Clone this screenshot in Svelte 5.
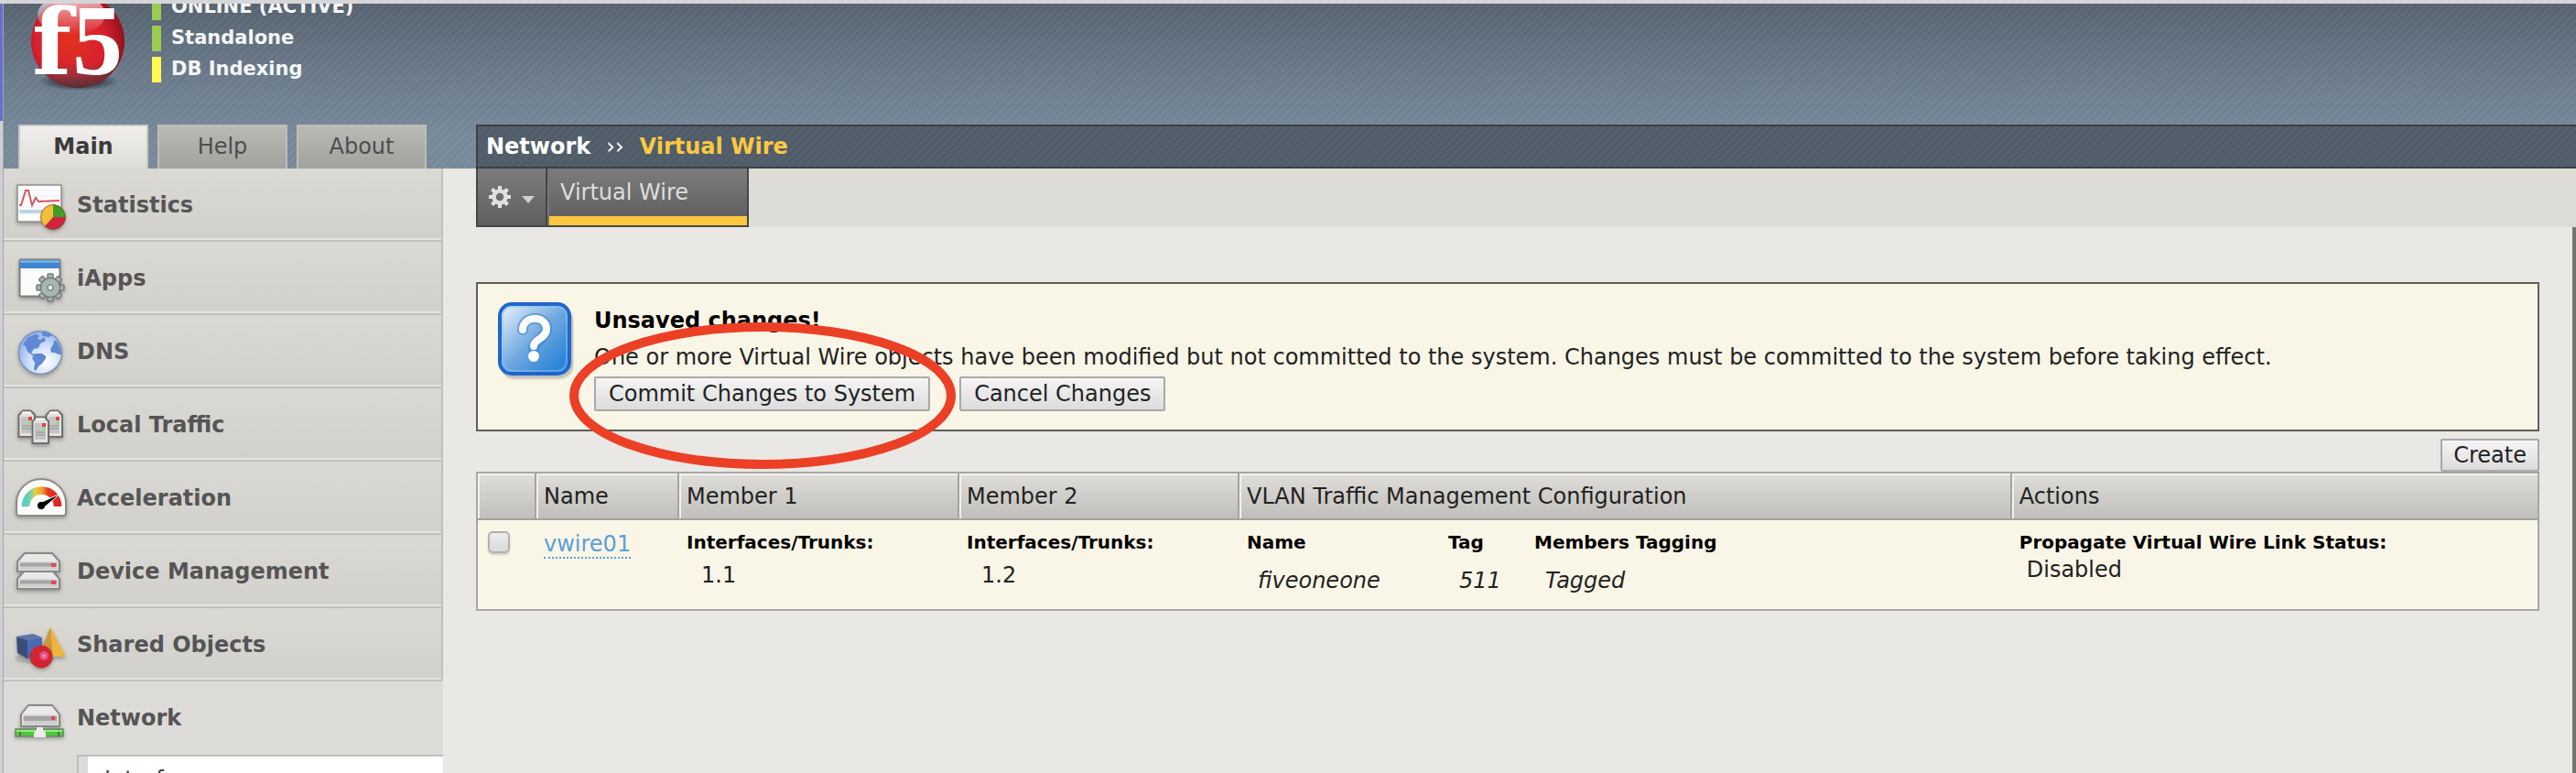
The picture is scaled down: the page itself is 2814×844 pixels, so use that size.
<script>
  let activeTab = 'Main';
  let selected = false;

  const tabs = ['Main', 'Help', 'About'];

  const statuses = [
    { label: 'ONLINE (ACTIVE)', color: '#9ccb52' },
    { label: 'Standalone', color: '#9ccb52' },
    { label: 'DB Indexing', color: '#fdfb52' },
  ];

  const sections = [
    { id: 'stats', label: 'Statistics' },
    { id: 'iapps', label: 'iApps' },
    { id: 'dns', label: 'DNS' },
    { id: 'ltm', label: 'Local Traffic' },
    { id: 'accel', label: 'Acceleration' },
    { id: 'device', label: 'Device Management' },
    { id: 'shared', label: 'Shared Objects' },
    { id: 'network', label: 'Network', open: true },
  ];

  const wires = [
    {
      name: 'vwire01',
      member1: '1.1',
      member2: '1.2',
      vlan: { name: 'fiveoneone', tag: '511', tagging: 'Tagged' },
      propagate: 'Disabled',
    },
  ];

  const gearTeeth = [0, 45, 90, 135, 180, 225, 270, 315];
</script>

<div class="frame">
  <div class="edge-left"></div>

  <div class="app">
    <header>
      <div class="brand">
        <svg class="logo" width="108" height="108" viewBox="0 0 108 108" role="img" aria-label="F5">
          <defs>
            <radialGradient id="ball" cx="0.42" cy="0.5" r="0.62">
              <stop offset="0" stop-color="#e0321f" />
              <stop offset="0.6" stop-color="#d8202f" />
              <stop offset="0.85" stop-color="#a5161f" />
              <stop offset="1" stop-color="#7c1219" />
            </radialGradient>
            <linearGradient id="shine" x1="0" y1="0" x2="0" y2="1">
              <stop offset="0" stop-color="#fff" stop-opacity="0.75" />
              <stop offset="1" stop-color="#fff" stop-opacity="0" />
            </linearGradient>
            <linearGradient id="low" x1="0" y1="0" x2="0" y2="1">
              <stop offset="0.72" stop-color="#555" stop-opacity="0" />
              <stop offset="1" stop-color="#4b3236" stop-opacity="0.85" />
            </linearGradient>
            <radialGradient id="ground">
              <stop offset="0.3" stop-color="#1b222b" stop-opacity="0.9" />
              <stop offset="1" stop-color="#1b222b" stop-opacity="0" />
            </radialGradient>
          </defs>
          <ellipse cx="54" cy="95" rx="44" ry="10" fill="url(#ground)" />
          <circle cx="53" cy="51" r="51" fill="url(#ball)" />
          <ellipse cx="46" cy="22" rx="37" ry="22" fill="url(#shine)" />
          <circle cx="53" cy="51" r="51" fill="url(#low)" />
          <text x="3" y="87" class="logo-f">f</text>
          <text x="47" y="87" class="logo-5">5</text>
        </svg>
        <ul class="statuses">
          {#each statuses as status}
            <li><span class="bar" style="background-color: {status.color}"></span>{status.label}</li>
          {/each}
        </ul>
      </div>

      <div class="tabs">
        {#each tabs as tab}
          <button type="button" class:active={activeTab === tab} on:click={() => (activeTab = tab)}>{tab}</button>
        {/each}
      </div>

      <nav class="breadcrumb" aria-label="Breadcrumb">
        <span>Network</span>
        <span class="sep">››</span>
        <span class="current">Virtual Wire</span>
      </nav>
    </header>

    <div class="body">
      <nav class="sidebar">
        {#each sections as section}
          <a href="#{section.id}" class="section" class:open={section.open}>
            <svg class="icon" width="60" height="56" viewBox="0 0 60 56" aria-hidden="true">
              {#if section.id === 'stats'}
                <rect x="3" y="6" width="48" height="40" fill="#fcfcfd" stroke="#8f8f8f" stroke-width="1.5" />
                <path d="M6 12h42M6 18h42M6 30h42" stroke="#e9eef4" stroke-width="1" />
                <rect x="5" y="33" width="42" height="4" fill="#bcd3e8" />
                <path d="M5 28h2L12 12h3l4 16 4-8 3 4 23-1" fill="none" stroke="#d4585f" stroke-width="2" />
                <circle cx="42" cy="41" r="13.5" fill="#d0243a" />
                <path d="M42 41V27.5A13.5 13.5 0 0 1 55.500 41z" fill="#3f9f26" />
                <path d="M42 41V27.500A13.500 13.500 0 0 0 33 51z" fill="#f2bf3d" />
                <circle cx="42" cy="41" r="13.5" fill="none" stroke="#6d4a1c" stroke-opacity="0.6" />
              {:else if section.id === 'iapps'}
                <rect x="5.500" y="7.500" width="44" height="40" rx="1" fill="#fbfafd" stroke="#7d7d7d" stroke-width="2" />
                <rect x="6" y="8" width="43" height="9" fill="#3f86cc" />
                <rect x="6" y="8" width="43" height="3" fill="#6fb0ea" />
                <g fill="#a9b5b2" stroke="#737d7c" stroke-width="1.5">
                  {#each gearTeeth as angle}
                    <rect x="36" y="23" width="6" height="9" rx="1" transform="rotate({angle} 39 38)" />
                  {/each}
                  <circle cx="39" cy="38" r="10.500" />
                </g>
                <circle cx="39" cy="38" r="9.500" fill="#a9b5b2" />
                <circle cx="39" cy="38" r="3" fill="#f3f5f5" stroke="#808b89" stroke-width="1.5" />
              {:else if section.id === 'dns'}
                <defs>
                  <radialGradient id="sea" cx="0.62" cy="0.7" r="0.7">
                    <stop offset="0" stop-color="#ffffff" />
                    <stop offset="0.5" stop-color="#d3e1fa" />
                    <stop offset="1" stop-color="#91b2ec" />
                  </radialGradient>
                </defs>
                <circle cx="28" cy="29" r="23.500" fill="url(#sea)" stroke="#7f93b8" stroke-width="1.5" />
                <g fill="#5f89d6">
                  <path d="M9 20l6-8 8-3 4 1-2 4 3 1 4-3 2 4-6 3-2 5-5 1-3 4 5 3-2 1-7-5-2-6z" />
                  <path d="M29 7l6-1 6 4-4 2-6-1z" />
                  <path d="M22 30l8 0 4 3 0 2-4 6-4 3-3 5-2-2 1-7-3-5z" />
                  <path d="M39 25l3-5 1-4 3 0 4 8 1 7-3 0-4-2-4 0z" />
                </g>
              {:else if section.id === 'ltm'}
                {#each [[4, 12], [34, 12], [19, 19]] as [x, y]}
                  <g transform="translate({x} {y})">
                    <path d="M0.500 5L5 0.500h8.500L18 5v24H0.500z" fill="#e3e3e3" stroke="#6f6f6f" stroke-width="2" />
                    <path d="M3 7h12v18H3z" fill="#c4c4c4" />
                    <path d="M4 17h10M4 20h10" stroke="#8f8f8f" stroke-width="1" />
                    <path d="M4 2.500h10" stroke="#fafafa" stroke-width="2" />
                    <rect x="11" y="7" width="4" height="4" fill="#ea3b48" />
                    <rect x="11" y="12" width="4" height="3" fill="#93de74" />
                  </g>
                {/each}
              {:else if section.id === 'accel'}
                <defs>
                  <linearGradient id="heat">
                    <stop offset="0" stop-color="#52cfc4" />
                    <stop offset="0.15" stop-color="#7fd0a4" />
                    <stop offset="0.3" stop-color="#e2d043" />
                    <stop offset="0.5" stop-color="#f0a534" />
                    <stop offset="0.7" stop-color="#e6391f" />
                    <stop offset="1" stop-color="#e02424" />
                  </linearGradient>
                </defs>
                <path d="M2 44V33a27 26 0 0 1 54 0v11q0 3-3 3H5q-3 0-3-3z" fill="#fbfbf9" stroke="#8b8b8b" stroke-width="2" />
                <path d="M12 37a17.500 17.500 0 0 1 35 0" fill="none" stroke="url(#heat)" stroke-width="8.500" />
                <path d="M26.500 33.500L50 23 31 39z" fill="#000" stroke="#fbfbf9" stroke-width="1" />
                <circle cx="29" cy="36" r="4" fill="#000" />
              {:else if section.id === 'device'}
                {#each [26, 7] as y}
                  <g transform="translate(2 {y})">
                    <path d="M1 10L9 1h30l8 9v11H1z" fill="#e8e8e8" stroke="#888" stroke-width="2" stroke-linejoin="round" />
                    <path d="M2.500 10.500h43v9h-43z" fill="#cfcfcf" />
                    <path d="M4 11.500h40v4H4z" fill="#a5a5a5" />
                    <rect x="38" y="12" width="5" height="4" fill="#e8414e" />
                  </g>
                {/each}
              {:else if section.id === 'shared'}
                <ellipse cx="22" cy="43" rx="22" ry="6" fill="#000" opacity="0.12" />
                <path d="M2 19l12 4v20L3 37z" fill="#3a4d7a" />
                <path d="M2 19l18-3 10 4-16 3z" fill="#5a74ae" />
                <path d="M14 23l16-3v20l-16 3z" fill="#4a6bb3" />
                <path d="M39 9l17 32H28z" fill="#edb53f" />
                <path d="M39 9l3 32H26z" fill="#c99a3a" />
                <circle cx="29" cy="41" r="12.500" fill="#d02630" />
                <circle cx="32" cy="40" r="5" fill="#ea4c86" />
                <circle cx="32" cy="40" r="2" fill="#f48fb4" />
              {:else}
                <path d="M7 24l8-10h26l8 10v13H7z" fill="#eaeaea" stroke="#888" stroke-width="2" stroke-linejoin="round" />
                <path d="M9 24.500h38v11H9z" fill="#cfcfcf" />
                <path d="M10 26h36v5H10z" fill="#a5a5a5" />
                <rect x="40" y="26" width="4" height="4" fill="#e8414e" />
                <rect x="1" y="40" width="52" height="8" fill="#4fc93a" stroke="#6b8a63" stroke-width="1.500" />
                <path d="M6 40v8M48 40v8" stroke="#54704e" stroke-width="2" />
                <path d="M2 42h50" stroke="#93ea80" stroke-width="2" />
                <path d="M24 38h7v3l3 3v5H21v-5l3-3z" fill="#ececec" />
              {/if}
            </svg>
            {section.label}
          </a>
        {/each}
        <div class="submenu">
          <a href="#interfaces">Interfaces</a>
        </div>
      </nav>

      <main>
        <div class="menubar">
          <button type="button" class="gear" aria-label="Options">
            <svg width="52" height="26" viewBox="0 0 52 26" aria-hidden="true">
              <g fill="#e4e4e4">
                {#each gearTeeth as angle}
                  <rect x="11" y="1" width="4" height="6" transform="rotate({angle} 13 13)" />
                {/each}
              </g>
              <circle cx="13" cy="13" r="6.500" fill="none" stroke="#e0e0e0" stroke-width="4.500" />
              <path d="M37 12h14l-7 8z" fill="#cfcfcf" />
            </svg>
          </button>
          <a href="#virtual-wire" class="menu-tab">Virtual Wire</a>
        </div>

        <div class="content">
          <section class="notice">
            <svg width="88" height="88" viewBox="0 0 88 88" aria-hidden="true">
              <defs>
                <linearGradient id="tile" x1="0" y1="0" x2="1" y2="1">
                  <stop offset="0.05" stop-color="#e4eefa" />
                  <stop offset="0.5" stop-color="#6ea8e0" />
                  <stop offset="0.85" stop-color="#2f86d8" />
                </linearGradient>
              </defs>
              <rect x="3" y="6" width="80" height="79" rx="15" fill="#000" opacity="0.08" />
              <rect x="2" y="4" width="80" height="79" rx="15" fill="#000" opacity="0.14" />
              <rect x="2" y="2" width="76" height="76" rx="13" fill="url(#tile)" stroke="#1f66cc" stroke-width="4" />
              <rect x="5" y="5" width="70" height="70" rx="10" fill="none" stroke="#8fc1f2" stroke-opacity="0.5" stroke-width="2" />
              <path d="M27 30c0-16 26-16 26-1 0 11-14 11-14 23" fill="none" stroke="#3b82d0" stroke-opacity="0.55" stroke-width="12" stroke-linecap="round" />
              <path d="M27 30c0-16 26-16 26-1 0 11-14 11-14 19" fill="none" stroke="#fff" stroke-width="8" stroke-linecap="round" />
              <circle cx="39" cy="59" r="6" fill="#fff" />
            </svg>
            <div class="notice-text">
              <h2>Unsaved changes!</h2>
              <p>One or more Virtual Wire objects have been modified but not committed to the system. Changes must be committed to the system before taking effect.</p>
              <div class="actions">
                <div class="marked">
                  <button type="button">Commit Changes to System</button>
                  <svg class="ring" width="422" height="160" viewBox="0 0 422 160" aria-hidden="true">
                    <ellipse cx="211" cy="80" rx="206" ry="75" />
                  </svg>
                </div>
                <button type="button">Cancel Changes</button>
              </div>
            </div>
          </section>

          <div class="toolbar">
            <button type="button">Create</button>
          </div>

          <table class="wires">
            <colgroup>
              <col class="c-check" />
              <col class="c-name" />
              <col class="c-member" />
              <col class="c-member" />
              <col class="c-vlan" />
              <col />
            </colgroup>
            <thead>
              <tr>
                <th></th>
                <th>Name</th>
                <th>Member 1</th>
                <th>Member 2</th>
                <th>VLAN Traffic Management Configuration</th>
                <th>Actions</th>
              </tr>
            </thead>
            <tbody>
              {#each wires as wire}
                <tr>
                  <td class="check"><input type="checkbox" aria-label="Select {wire.name}" bind:checked={selected} /></td>
                  <td><a class="wire-link" href="#{wire.name}">{wire.name}</a></td>
                  <td>
                    <strong>Interfaces/Trunks:</strong>
                    <div class="member">{wire.member1}</div>
                  </td>
                  <td>
                    <strong>Interfaces/Trunks:</strong>
                    <div class="member">{wire.member2}</div>
                  </td>
                  <td>
                    <table class="vlan">
                      <thead>
                        <tr><th class="v-name">Name</th><th class="v-tag">Tag</th><th>Members Tagging</th></tr>
                      </thead>
                      <tbody>
                        <tr><td>{wire.vlan.name}</td><td>{wire.vlan.tag}</td><td>{wire.vlan.tagging}</td></tr>
                      </tbody>
                    </table>
                  </td>
                  <td>
                    <strong>Propagate Virtual Wire Link Status:</strong>
                    <div class="propagate">{wire.propagate}</div>
                  </td>
                </tr>
              {/each}
            </tbody>
          </table>
        </div>
      </main>
    </div>
  </div>
</div>

<style>
  :global(body) {
    margin: 0;
    background-color: #e9e8e4;
  }

  .frame {
    display: flex;
    height: 100vh;
    overflow: hidden;
    box-sizing: border-box;
    border-top: 4px solid #d6d6d8;
    background-color: #e9e8e4;
    color: #222;
    font-family: 'DejaVu Sans', Verdana, sans-serif;
    font-size: 24px;
    line-height: 28px;
  }

  .edge-left {
    flex: none;
    width: 4px;
    background: linear-gradient(#6370d0 128px, #cfcfd4 128px);
    box-sizing: border-box;
    border-right: 1px solid #a5a5ab;
  }

  .app {
    flex: 1;
    min-width: 0;
    display: flex;
    flex-direction: column;
  }

  header {
    display: grid;
    grid-template-columns: 516px 1fr;
    grid-template-rows: 132px 48px;
    background:
      repeating-linear-gradient(135deg, rgba(255, 255, 255, 0.04) 0 3px, transparent 3px 6px),
      linear-gradient(#56626f, #6a7a8a 45%, #778899 80%);
  }

  .brand {
    grid-column: 1 / 3;
    display: flex;
    align-items: flex-end;
    overflow: hidden;
    padding-left: 28px;
  }

  .logo {
    flex: none;
    margin-bottom: 34px;
  }

  .logo-f,
  .logo-5 {
    fill: #fff;
    font-weight: bold;
  }

  .logo-f {
    font-family: 'DejaVu Serif', serif;
    font-size: 100px;
  }

  .logo-5 {
    font-family: 'Liberation Serif', serif;
    font-size: 110px;
  }

  .statuses {
    display: flex;
    flex-direction: column;
    gap: 6px;
    margin: 0 0 46px 26px;
    padding: 0;
    list-style: none;
    color: #f4f6f8;
    font-size: 21px;
    font-weight: bold;
  }

  .statuses li {
    display: flex;
    gap: 11px;
    line-height: 26px;
    height: 28px;
  }

  .bar {
    width: 10px;
    height: 28px;
  }

  .tabs {
    display: flex;
    gap: 10px;
    padding-left: 16px;
  }

  .tabs button {
    width: 142px;
    padding: 0 0 2px;
    border: 2px solid #bdbdb9;
    border-bottom: none;
    background: linear-gradient(#b9b9b5, #a1a19d);
    color: #4d4d4d;
    font: inherit;
    cursor: pointer;
  }

  .tabs button.active {
    border-color: #c9c9c6;
    background: linear-gradient(#f0efed, #dddcd8);
    color: #3b3b3b;
    font-weight: bold;
  }

  .breadcrumb {
    display: flex;
    align-items: center;
    gap: 17px;
    padding-left: 9px;
    border: 2px solid #3d4143;
    border-right: none;
    background: repeating-linear-gradient(135deg, #54606c 0 3px, #4f5b66 3px 6px);
    color: #fff;
    font-weight: bold;
  }

  .breadcrumb .sep {
    font-weight: normal;
  }

  .breadcrumb .current {
    color: #fdc840;
  }

  .body {
    flex: 1;
    display: flex;
    min-height: 0;
  }

  .sidebar {
    flex: none;
    width: 480px;
    background-color: #dddcd8;
  }

  .section {
    display: flex;
    align-items: center;
    gap: 8px;
    height: 80px;
    box-sizing: border-box;
    padding: 2px 0 0 12px;
    border-right: 2px solid #bfbfbc;
    border-bottom: 2px solid #c1c0bd;
    box-shadow: inset 0 -2px 0 #e6e5e2;
    background: linear-gradient(#dad9d4, #d1d0cb);
    color: #555;
    font-weight: bold;
    text-decoration: none;
  }

  .section.open {
    border-color: transparent;
    box-shadow: none;
    background: none;
  }

  .icon {
    flex: none;
    filter: drop-shadow(0 2px 2px rgba(0, 0, 0, 0.3));
  }

  .submenu {
    margin-left: 80px;
    border-top: 2px solid #bdbdbb;
    border-left: 2px solid #bdbdbb;
    box-shadow: inset 10px 0 0 #dcdcdc;
    background-color: #fff;
  }

  .submenu a {
    display: block;
    padding: 11px 28px;
    color: #444;
    text-decoration: none;
  }

  main {
    flex: 1;
    min-width: 0;
    display: flex;
    flex-direction: column;
    padding-left: 36px;
  }

  .menubar {
    display: flex;
    height: 64px;
    background-color: #dddcd7;
  }

  .gear {
    width: 78px;
    padding: 0;
    border: 2px solid #464646;
    border-top: none;
    background: linear-gradient(#7c7c7c, #5f5f5f);
    cursor: pointer;
  }

  .gear svg {
    display: block;
    margin: 0 auto;
  }

  .menu-tab {
    width: 220px;
    box-sizing: border-box;
    padding: 12px 14px;
    border-right: 2px solid #464646;
    border-bottom: 2px solid #464646;
    box-shadow: inset 2px 0 0 #777, inset 0 -10px 0 #fdc840;
    background: linear-gradient(#7c7c7c, #626262 50px);
    color: #dedede;
    text-decoration: none;
  }

  .content {
    flex: 1;
    padding: 60px 36px 0 0;
    border-right: 4px solid #737373;
  }

  .notice {
    display: flex;
    gap: 17px;
    padding: 20px 22px;
    border: 2px solid #5f5f5a;
    background-color: #faf6e7;
  }

  .notice > svg {
    flex: none;
  }

  h2 {
    margin: 6px 0 12px;
    color: #000;
    font-size: 24px;
    line-height: 28px;
  }

  p {
    margin: 0 0 7px;
  }

  .actions {
    display: flex;
    gap: 32px;
  }

  .actions button,
  .toolbar button {
    height: 38px;
    padding: 0 14px;
    border: 2px solid #a9a9a9;
    border-radius: 2px;
    background: linear-gradient(#f5f5f5, #dcdcdc);
    color: #222;
    font: inherit;
    white-space: nowrap;
    cursor: pointer;
  }

  .marked {
    position: relative;
  }

  /* ring drawn over the button, wider than it */
  .ring {
    position: absolute;
    top: -59px;
    left: -27px;
    pointer-events: none;
  }

  .ring ellipse {
    fill: none;
    stroke: #ec4026;
    stroke-width: 10;
  }

  .toolbar {
    display: flex;
    justify-content: flex-end;
    padding-top: 8px;
  }

  .toolbar button {
    height: 36px;
    padding: 0 12px;
  }

  table {
    border-spacing: 0;
  }

  .wires {
    width: 100%;
    table-layout: fixed;
    border: 2px solid #a6a7a6;
  }

  .c-check {
    width: 64px;
  }

  .c-name {
    width: 156px;
  }

  .c-member {
    width: 306px;
  }

  .c-vlan {
    width: 37.5%;
  }

  th,
  td {
    padding: 0;
    text-align: left;
    vertical-align: top;
  }

  .wires > thead th {
    height: 49px;
    padding: 0 8px;
    border-right: 2px solid #a3a3a1;
    border-bottom: 2px solid #a3a3a1;
    box-shadow: inset 2px 2px 0 #f1f1ef;
    background: linear-gradient(#dfdeda, #bfbeba);
    font-weight: normal;
    vertical-align: middle;
  }

  .wires > thead th:last-child {
    border-right: none;
  }

  .wires > tbody > tr > td {
    height: 85px;
    padding: 12px 8px 0;
    background-color: #faf6e7;
  }

  .wires > tbody > tr > td.check {
    padding-left: 11px;
  }

  input {
    display: block;
    width: 24px;
    height: 24px;
    margin: 0;
    appearance: none;
    border: 2px solid #b1b1b1;
    border-radius: 5px;
    background: linear-gradient(#ececec, #dadada);
    box-shadow: 0 2px 2px rgba(0, 0, 0, 0.15);
  }

  input:checked {
    background: #4a90d0;
  }

  .wire-link {
    display: inline-block;
    border-bottom: 2px dotted #5a9fd6;
    color: #5a9fd6;
    text-decoration: none;
  }

  strong,
  .vlan th {
    display: block;
    color: #000;
    font-size: 20px;
    line-height: 24px;
  }

  .member {
    margin: 10px 0 0 16px;
  }

  .propagate {
    margin: 4px 0 0 8px;
  }

  .vlan th {
    display: table-cell;
  }

  .v-name {
    width: 220px;
  }

  .v-tag {
    width: 94px;
  }

  .vlan td {
    padding: 16px 12px 0;
    font-style: italic;
  }
</style>
